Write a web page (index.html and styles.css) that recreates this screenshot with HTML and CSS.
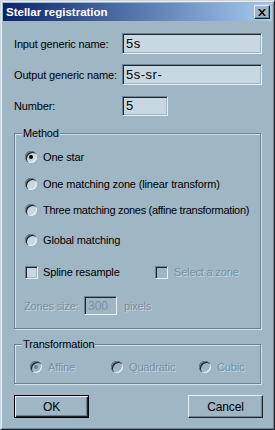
FILE: index.html
```html
<!DOCTYPE html>
<html lang="en">
  <head>
    <meta charset="UTF-8" />
    <title>Stellar registration</title>
    <link rel="stylesheet" href="styles.css">
  </head>
  <body>
    <div class="window">
      <!-- Title bar -->
      <div class="titlebar">
        <span class="title">Stellar registration</span>
        <div class="close-btn">
          <svg width="8" height="7" viewBox="0 0 8 7">
            <path d="M0 0h2l2 2.5L6 0h2L5 3.5 8 7H6L4 4.5 2 7H0l3-3.5z" fill="#000"/>
          </svg>
        </div>
      </div>

      <div class="content">
        <div class="row">
          <span class="label">Input generic name:</span>
          <div class="edit wide">5s</div>
        </div>
        <div class="row row-gap">
          <span class="label">Output generic name:</span>
          <div class="edit wide">5s-sr-</div>
        </div>
        <div class="row row-gap">
          <span class="label">Number:</span>
          <div class="edit number">5</div>
        </div>

        <!-- Method group -->
        <div class="group method">
          <div class="group-title">Method</div>
          <div class="option opt-1"><span class="radio checked"></span>One star</div>
          <div class="option opt-2"><span class="radio"></span>One matching zone (linear transform)</div>
          <div class="option opt-3"><span class="radio"></span>Three matching zones (affine transformation)</div>
          <div class="option opt-4"><span class="radio"></span>Global matching</div>
          <div class="option opt-5">
            <div class="spline"><span class="check"></span>Spline resample</div>
            <span class="check disabled"></span><span class="muted">Select a zone</span>
          </div>
          <div class="zones-row">
            <span class="muted zones-label">Zones size:</span>
            <div class="edit small disabled">300</div>
            <span class="muted">pixels</span>
          </div>
        </div>

        <!-- Transformation group -->
        <div class="group transform">
          <div class="group-title">Transformation</div>
          <div class="trans-row">
            <div class="option t-affine"><span class="radio disabled checked"></span><span class="muted">Affine</span></div>
            <div class="option t-quad"><span class="radio disabled"></span><span class="muted">Quadratic</span></div>
            <div class="option"><span class="radio disabled"></span><span class="muted">Cubic</span></div>
          </div>
        </div>

        <div class="buttons">
          <div class="button default"><span>OK</span></div>
          <div class="button">Cancel</div>
        </div>
      </div>
    </div>
  </body>
</html>
```

FILE: styles.css
```css
/* Classic dialog look, tinted blue-gray */
body {
  margin: 0;
  font-family: "Liberation Sans", Arial, sans-serif;
  font-size: 11px;
  letter-spacing: -0.15px;
  white-space: nowrap;
  color: #000;
}

.window {
  width: 275px;
  height: 430px;
  box-sizing: border-box;
  background-color: #9fb6c4;
  border: 1px solid;
  border-color: #c9d7e0 #1c262c #1c262c #c9d7e0;
  box-shadow: inset 1px 1px 0 #e6eef3, inset -1px -1px 0 #6b8393;
  padding: 2px;
}

/* Title bar */
.titlebar {
  height: 18px;
  display: flex;
  align-items: center;
  justify-content: space-between;
  padding: 0 2px 0 3px;
  background: linear-gradient(to right, #0a246a, #a6caf0);
}

.title {
  color: #fff;
  font-weight: bold;
  font-size: 11.5px;
  letter-spacing: 0;
}

.close-btn {
  width: 16px;
  height: 14px;
  box-sizing: border-box;
  display: flex;
  align-items: center;
  justify-content: center;
  background-color: #9fb6c4;
  border: 1px solid;
  border-color: #e6eef3 #1c262c #1c262c #e6eef3;
  box-shadow: inset -1px -1px 0 #6b8393;
}

.content {
  padding: 12px 10px 0 11px;
}

/* Label + edit rows */
.row {
  display: flex;
  align-items: center;
  height: 21px;
}

.row-gap {
  margin-top: 10px;
}

.label {
  width: 108px;
}

.edit {
  height: 21px;
  box-sizing: border-box;
  display: flex;
  align-items: center;
  padding-left: 3px;
  background-color: #c8d8e1;
  border: 1px solid;
  border-color: #6b8393 #e6eef3 #e6eef3 #6b8393;
  box-shadow: inset 1px 1px 0 #1c262c, inset -1px -1px 0 #9fb6c4;
  font-size: 13px;
  letter-spacing: 0.5px;
}

.edit.wide {
  width: 140px;
}

.edit.number {
  width: 46px;
  height: 20px;
}

.edit.small {
  width: 33px;
  height: 19px;
  margin-right: 7px;
  font-size: 12px;
  letter-spacing: 0;
}

.edit.disabled {
  background-color: #9fb6c4;
  color: #7891a1;
}

/* Etched group boxes */
.group {
  border: 1px solid #6b8393;
  box-shadow: inset 1px 1px 0 #d6e2ea, 1px 1px 0 #d6e2ea;
  width: 247px;
  padding: 0 0 0 10px;
  box-sizing: border-box;
}

.group-title {
  width: fit-content;
  height: 13px;
  line-height: 13px;
  margin: -7px 0 0 -3px;
  padding: 0 1px;
  background-color: #9fb6c4;
}

.method {
  margin-top: 17px;
  height: 196px;
}

.transform {
  margin-top: 15px;
  height: 40px;
}

.option {
  display: flex;
  align-items: center;
  height: 16px;
}

.opt-1 { margin-top: 9px; }
.opt-2 { margin-top: 11px; }
.opt-3 { margin-top: 10px; letter-spacing: -0.3px; }
.opt-4 { margin-top: 14px; }
.opt-5 { margin-top: 16px; }

.radio {
  width: 12px;
  height: 12px;
  border-radius: 50%;
  margin-right: 6px;
  flex: none;
  display: flex;
  align-items: center;
  justify-content: center;
  background-color: #c8d8e1;
  box-shadow: inset 1px 1px 0 #6b8393, inset 2px 2px 0 #1c262c, inset -1px -1px 0 #e6eef3;
}

.radio.checked::after {
  content: "";
  width: 4px;
  height: 4px;
  border-radius: 50%;
  background-color: #000;
}

.radio.disabled {
  background-color: #9fb6c4;
}

.radio.disabled.checked::after {
  background-color: #6b8393;
}

.spline {
  display: flex;
  align-items: center;
  width: 130px;
}

.check {
  width: 13px;
  height: 13px;
  box-sizing: border-box;
  margin-right: 5px;
  flex: none;
  background-color: #c8d8e1;
  border: 1px solid;
  border-color: #6b8393 #e6eef3 #e6eef3 #6b8393;
  box-shadow: inset 1px 1px 0 #1c262c, inset -1px -1px 0 #9fb6c4;
}

.check.disabled {
  background-color: #9fb6c4;
  margin-right: 6px;
}

.muted {
  color: #7891a1;
  text-shadow: 1px 1px 0 #c4d4de;
}

.zones-row {
  display: flex;
  align-items: center;
  margin: 16px 0 0 -1px;
}

.zones-label {
  width: 60px;
}

.trans-row {
  display: flex;
  margin-top: 8px;
  padding-left: 5px;
}

.t-affine { width: 81px; }
.t-quad { width: 88px; }

/* Buttons */
.buttons {
  display: flex;
  justify-content: space-between;
  width: 249px;
  margin-top: 11px;
}

.button {
  width: 75px;
  height: 23px;
  box-sizing: border-box;
  display: flex;
  align-items: center;
  justify-content: center;
  font-size: 12px;
  border: 1px solid;
  border-color: #e6eef3 #1c262c #1c262c #e6eef3;
  box-shadow: inset -1px -1px 0 #6b8393;
}

.button.default {
  border: 1px solid #000;
  box-shadow: inset 1px 1px 0 #e6eef3, inset -1px -1px 0 #1c262c, inset -2px -2px 0 #6b8393;
}
```
